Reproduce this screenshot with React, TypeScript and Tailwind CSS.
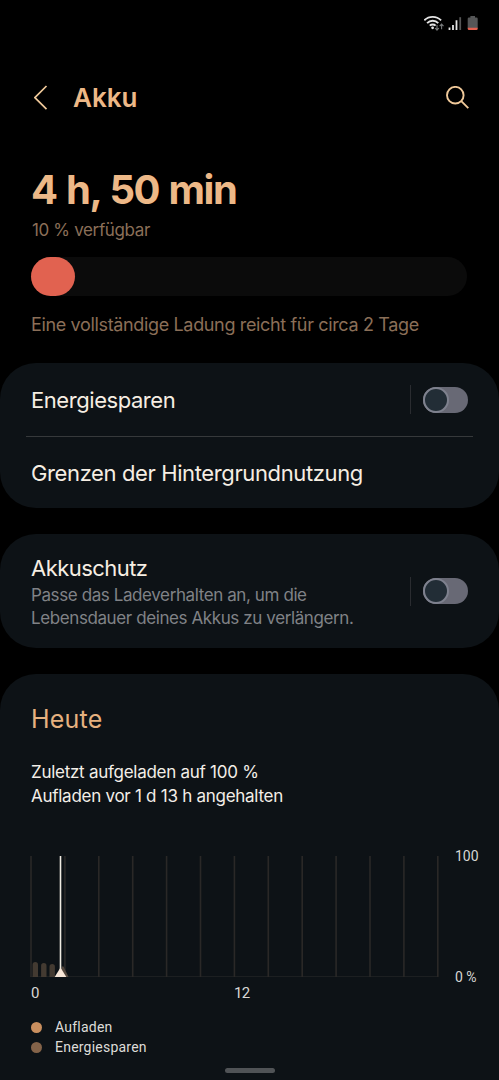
const LINES = Array.from({ length: 13 }, (_, i) => 1 + i * 33.9);

const BARS = [
  { x: 2.6, h: 15 },
  { x: 11.1, h: 14 },
  { x: 19.5, h: 13 },
];

const LEGEND = [
  { label: 'Aufladen', dot: 'bg-[#c98f5f]' },
  { label: 'Energiesparen', dot: 'bg-[#846349]' },
];

function StatusBar() {
  return (
    <div className="flex h-[46px] justify-end pr-[19px] pt-3.5">
      <svg width="56" height="18" viewBox="424 14 56 18" fill="none">
        {/* Wifi */}
        <g stroke="#e4e4e4" strokeWidth="1.9">
          <path d="M424.3 20.4a11.8 11.8 0 0 1 16.8 0" />
          <path d="M427.1 23.1a7.9 7.9 0 0 1 11.2 0" />
          <path d="M429.8 25.7a4.1 4.1 0 0 1 5.8 0" />
        </g>
        <circle cx="432.6" cy="27.8" r="1.4" fill="#e4e4e4" />
        <path d="M437 25v5m-1.9-2 1.9 2.1 1.9-2.1M441.6 29.2v-5m-1.9 2 1.9-2.1 1.9 2.1" stroke="#77797a" strokeWidth="1.1" />
        {/* Signal */}
        <path d="M449.5 30v-2.4M453 30v-5M456.5 30v-9.7" stroke="#e4e4e4" strokeWidth="1.8" />
        <path d="M460.2 30V17.2" stroke="#555" strokeWidth="1.8" />
        {/* Battery */}
        <path d="M470.4 16h4.6v1.5h1.4a1.3 1.3 0 0 1 1.3 1.3v9.4H467.700V18.800a1.3 1.3 0 0 1 1.300-1.300h1.400z" fill="#555657" />
        <path d="M467.7 27.7h10v1.1a1.3 1.3 0 0 1-1.3 1.3h-7.4a1.3 1.3 0 0 1-1.3-1.3z" fill="#e3604f" />
      </svg>
    </div>
  );
}

function Toggle() {
  return (
    <div className="flex items-center gap-3">
      <div className="h-[29px] w-px bg-[#2a2c30]" />
      <div className="h-[26px] w-[45px] rounded-full bg-[#686975]">
        <div className="size-[26px] rounded-full border-[2.5px] border-[#7e818e] bg-[#222d36]" />
      </div>
    </div>
  );
}

function Chart() {
  return (
    <div className="mt-[48px] flex h-[121px] justify-between">
      <svg width="410" height="121" viewBox="0 0 410 121">
        <path d="M0 120.5h408" stroke="#1c1f21" />
        {LINES.map((x) => (
          <rect key={x} x={x - 0.8} y="0" width="1.6" height="121" fill="#2a2827" />
        ))}
        {BARS.map((bar) => (
          <path
            key={bar.x}
            transform={`translate(${bar.x} ${121 - bar.h})`}
            d={`M0 ${bar.h}V2.7a2.7 2.7 0 0 1 5.4 0V${bar.h}z`}
            fill="#433a31"
          />
        ))}
        <path d="M31.5 110.5h2l5 10.5h-6z" fill="#52463c" />
        <path d="M30.5 0v115" stroke="#efebe2" strokeWidth="1.6" />
        <path d="M30.5 111.5l5.8 9.5H24.7z" fill="#f7e6d7" />
      </svg>
      <div className="-my-2 flex w-11 flex-col justify-between font-[Roboto,sans-serif] text-sm leading-4 text-[#d7d6d4]">
        <span>100</span>
        <span>0 %</span>
      </div>
    </div>
  );
}

export default function App() {
  return (
    <div className="relative flex h-[1080px] w-[499px] flex-col overflow-hidden bg-black font-[Inter,sans-serif] whitespace-nowrap">
      <StatusBar />

      <header className="flex h-[104px] items-center pr-[29px] pl-[34px] text-[#edb887]">
        <svg width="14" height="26" viewBox="0 0 14 26" fill="none" stroke="#f0c99a" strokeWidth="1.7">
          <path d="M12.5 1 .9 12.6l11.6 11.6" />
        </svg>
        <h1 className="ml-[25px] text-[26px] leading-8 font-semibold">Akku</h1>
        <svg className="ml-auto" width="24" height="24" viewBox="0 0 24 24" fill="none" stroke="#f0c99a" strokeWidth="1.9">
          <circle cx="9.3" cy="9.2" r="8.3" />
          <path d="m15.3 15.2 7 7" />
        </svg>
      </header>

      <section className="flex flex-col pt-4 pr-8 pl-[31px] text-[#8b6f58]">
        <h2 className="text-[40px] leading-[48px] font-bold tracking-[-1.5px] text-[#edb887] [word-spacing:1.5px]">4 h, 50 min</h2>
        <p className="mt-1 pl-px text-[17px] leading-6 tracking-[-0.35px]">10 % verfügbar</p>
        <div className="mt-[15px] h-[39px] rounded-full bg-[#0b0b0b]">
          <div className="h-full w-11 rounded-full bg-[#e16250]" />
        </div>
        <p className="mt-[17px] text-[18px] leading-6 tracking-[-0.35px]">Eine vollständige Ladung reicht für circa 2 Tage</p>
      </section>

      <section className="mt-[26px] rounded-[36px] bg-[#0d1216] text-[22px] leading-7 text-[#f6eee3]">
        <div className="flex h-[73px] items-center justify-between px-[31px]">
          <span className="tracking-[-0.44px]">Energiesparen</span>
          <Toggle />
        </div>
        <div className="mx-[26px] h-px bg-[#36393b]" />
        <div className="flex h-[71px] items-center pl-[31px]">
          <span className="tracking-[-0.38px]">Grenzen der Hintergrundnutzung</span>
        </div>
      </section>

      <section className="mt-[26px] flex h-[114px] items-center justify-between rounded-[36px] bg-[#0d1216] px-[31px]">
        <div className="pt-[2px]">
          <h3 className="text-[22px] leading-7 tracking-[-0.55px] text-[#f6eee3]">Akkuschutz</h3>
          <p className="mt-0.5 text-[17px] leading-[23px] tracking-[-0.4px] text-[#808286]">
            Passe das Ladeverhalten an, um die
            <br />
            Lebensdauer deines Akkus zu verlängern.
          </p>
        </div>
        <Toggle />
      </section>

      <section className="mt-[26px] flex-1 rounded-t-[36px] bg-[#0d1216] pt-[29px] pl-[30px]">
        <h3 className="pl-px text-[25px] leading-8 tracking-[0.2px] text-[#e6b17f]">Heute</h3>
        <p className="mt-[25px] pl-px text-[17px] leading-6 tracking-[-0.27px] text-[#f3eee8]">
          Zuletzt aufgeladen auf 100 %
          <br />
          Aufladen vor 1 d 13 h angehalten
        </p>
        <Chart />
        <div className="mt-2 flex pl-[1px] font-[Roboto,sans-serif] text-[15px] leading-4 text-[#d9d8d5]">
          <span className="w-[203px]">0</span>
          <span className="tracking-[-0.6px]">12</span>
        </div>
        <ul className="mt-4 font-[Roboto,sans-serif] text-sm leading-5 text-[#dedcd8]">
          {LEGEND.map((item) => (
            <li key={item.label} className="flex items-center gap-[13px] pl-px">
              <span className={`size-[11px] rounded-full ${item.dot}`} />
              <span className="tracking-[0.22px]">{item.label}</span>
            </li>
          ))}
        </ul>
      </section>

      {/* Gesture handle */}
      <div className="absolute bottom-[7px] left-1/2 h-[5px] w-[50px] -translate-x-1/2 rounded-full bg-[#505356]" />
    </div>
  );
}
